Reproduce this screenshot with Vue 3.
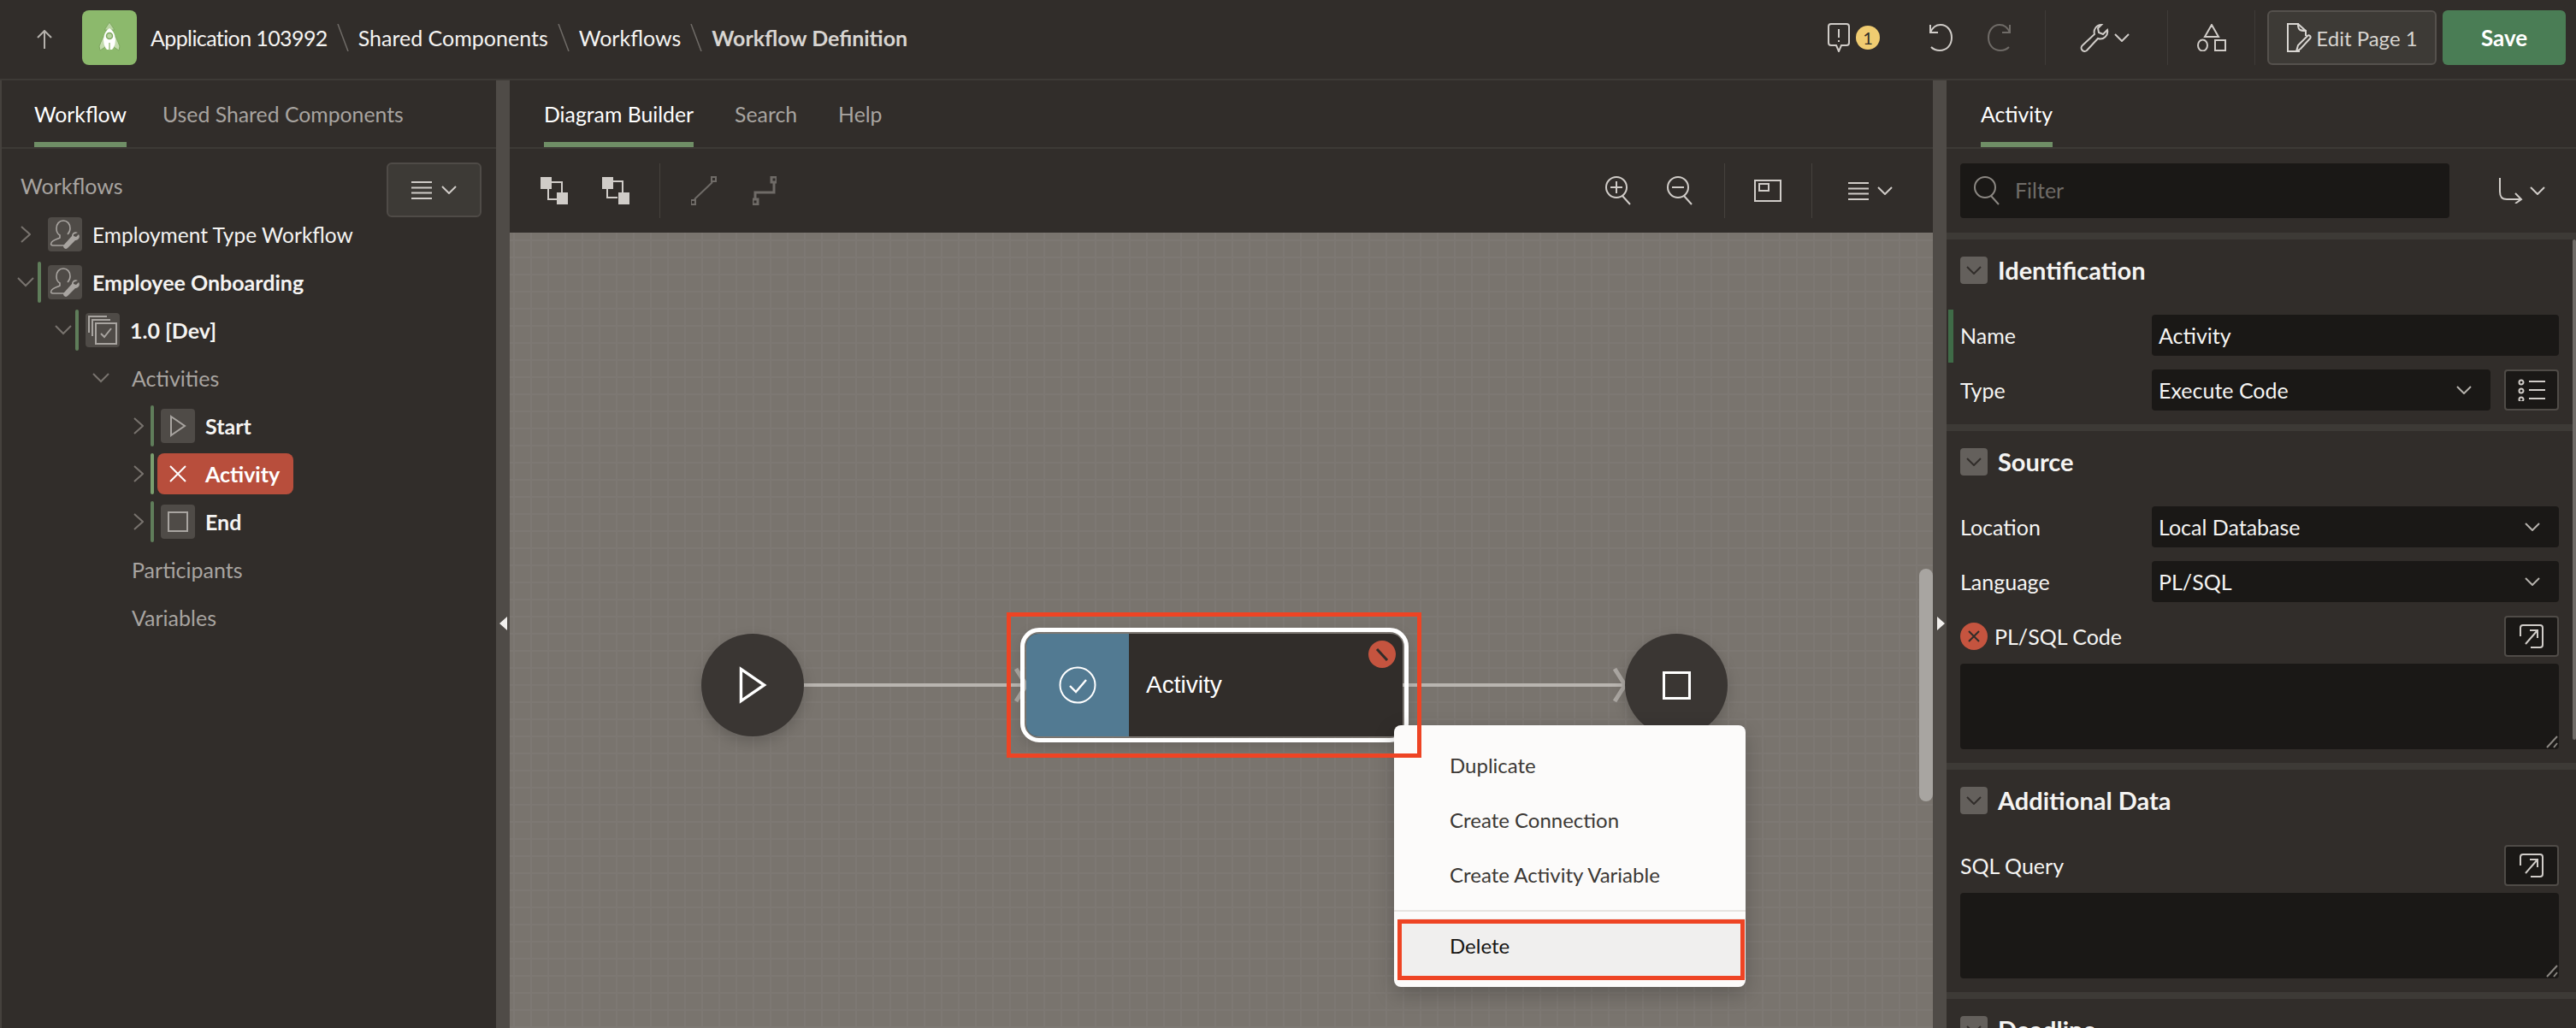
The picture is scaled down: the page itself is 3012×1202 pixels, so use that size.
<script setup>
import { h } from 'vue'

const I = {
  chevR: { w: 12, h: 20, d: 'M1 1L11 10L1 19' },
  chevD: { w: 20, h: 12, d: 'M1 1L10 10L19 1' },
  chevS: { w: 18, h: 10, d: 'M1 1L9 9L17 1' },
  menu: { w: 24, h: 21, d: 'M0 1H24M0 7.5H24M0 13.5H24M0 20H24' },
  up: { w: 20, h: 23, d: 'M10 22V1M2 9L10 1L18 9' },
  notif: { w: 26, h: 34, d: 'M4 1H22A3 3 0 0 1 25 4V23A3 3 0 0 1 22 26H16L13 33L10 26H4A3 3 0 0 1 1 23V4A3 3 0 0 1 4 1ZM13 7V17M13 20V22' },
  undo: { w: 32, h: 34, d: 'M5 2V11H14M5 11C8 4 13 2 17 2C25 2 30 9 30 17C30 26 24 32 16 32C12 32 9 31 6 28' },
  redo: { w: 32, h: 34, d: 'M27 2V11H18M27 11C24 4 19 2 15 2C7 2 2 9 2 17C2 26 8 32 16 32C20 32 23 31 26 28' },
  wrench: { w: 34, h: 34, d: 'M25 2A8.5 8.5 0 0 0 17 13L3 26A3.6 3.6 0 0 0 8 32L21 18A8.5 8.5 0 0 0 32 8L27 13L22 11L21 6Z' },
  shapes: { w: 34, h: 32, d: 'M17 1L25 15H9ZM12 25A5.5 6.5 0 1 1 1 25A5.5 6.5 0 1 1 12 25ZM21 19H33V31H21Z' },
  page: { w: 30, h: 34, d: 'M16 33H2V1H14C14 8 16 9 23 9V15M14 1L23 9M12 33L14 26L25 15C27 13 30 16 28 18L17 30Z' },
  align1: { w: 32, h: 32, d: 'M9 6H25V26H9Z' },
  align2: { w: 32, h: 32, d: 'M10 5H24V24M6 14V24H18' },
  line: { w: 30, h: 34, d: 'M4 27L25 7M0 28H5V33H0ZM24 1H29V6H24Z' },
  elbow: { w: 28, h: 34, d: 'M3 27V19H25V7M0 27H6V33H0ZM22 1H28V7H22Z' },
  zoomIn: { w: 32, h: 34, d: 'M25 13A12 12 0 1 1 1 13A12 12 0 1 1 25 13ZM20 23L29 33M13 6V20M6 13H20' },
  zoomOut: { w: 32, h: 34, d: 'M25 13A12 12 0 1 1 1 13A12 12 0 1 1 25 13ZM20 23L29 33M6 13H20' },
  frame: { w: 32, h: 26, d: 'M1 1H31V25H1ZM6 5H17V13H6Z' },
  search: { w: 32, h: 34, d: 'M25 13A12 12 0 1 1 1 13A12 12 0 1 1 25 13ZM20 23L29 33' },
  route: { w: 28, h: 30, d: 'M1 0V16C1 22 3 25 9 25H26M19 18L26 25L19 30' },
  list: { w: 32, h: 26, d: 'M6.5 4A2.5 2.5 0 1 1 1.5 4A2.5 2.5 0 1 1 6.5 4ZM6.5 14A2.5 2.5 0 1 1 1.5 14A2.5 2.5 0 1 1 6.5 14ZM6.5 24A2.5 2.5 0 1 1 1.5 24A2.5 2.5 0 1 1 6.5 24ZM13 3H32M13 13H32M13 23H32' },
  ext: { w: 28, h: 28, d: 'M1 14V4A3 3 0 0 1 4 1H24A3 3 0 0 1 27 4V24A3 3 0 0 1 24 27H13M7 23L21 7M12 7H21V16' },
  user: { w: 36, h: 34, sw: 1.6, d: 'M16 1C11 1 8 5 8 10C8 14 10 17 12 18V21C8 23 3 24 2 27C1 29 2 30 4 30H18M16 1C21 1 24 5 24 10C24 13 23 15 21 17', f: 'M33 15C30 13 26 15 26 19L17 29A2.5 2.5 0 0 0 21 33L30 24C34 24 36 20 34 17L31 20L28 19L28 17Z' },
  versions: { w: 34, h: 34, d: 'M1 20V1H22M5 24V5H26M9 9H33V33H9ZM15 21L19 25L27 15' },
  play: { w: 20, h: 26, d: 'M2 2L18 13L2 24Z' },
  stop: { w: 24, h: 24, d: 'M1 1H23V23H1Z' },
  x: { w: 20, h: 20, d: 'M1 1L19 19M19 1L1 19' }
}
const Ic = (p) => {
  const i = I[p.n]
  const kids = [h('path', { d: i.d })]
  if (i.f) kids.push(h('path', { d: i.f, fill: 'currentColor', stroke: 'none' }))
  return h('svg', { width: i.w, height: i.h, viewBox: `0 0 ${i.w} ${i.h}`, fill: 'none', stroke: 'currentColor', 'stroke-width': p.sw || i.sw || 2, class: 'ic' }, kids)
}
Ic.props = ['n', 'sw']

const crumbs = ['Application 103992', 'Shared Components', 'Workflows']

const tree = [
  { label: 'Employment Type Workflow', level: 0, chev: 'chevR', icon: 'user', cls: 'norm' },
  { label: 'Employee Onboarding', level: 0, chev: 'chevD', icon: 'user', bar: true, cls: 'bold' },
  { label: '1.0 [Dev]', level: 1, chev: 'chevD', icon: 'versions', bar: true, cls: 'bold' },
  { label: 'Activities', level: 2, chev: 'chevD', cls: 'muted' },
  { label: 'Start', level: 3, chev: 'chevR', icon: 'play', bar: true, cls: 'bold' },
  { label: 'Activity', level: 3, chev: 'chevR', icon: 'x', bar: true, cls: 'bold', err: true },
  { label: 'End', level: 3, chev: 'chevR', icon: 'stop', bar: true, cls: 'bold' },
  { label: 'Participants', level: 2, cls: 'muted' },
  { label: 'Variables', level: 2, cls: 'muted' }
]
const menuItems = ['Duplicate', 'Create Connection', 'Create Activity Variable']
</script>

<template>
  <div class="app">
    <header class="top">
      <span class="up"><Ic n="up" /></span>
      <span class="logo">
        <svg width="64" height="64" viewBox="0 0 64 64">
          <path d="M26 17L32 8L38 17Z" transform="translate(0 6)" fill="#b9d4a2" stroke="#7fa861" />
          <path d="M25 30L20 42L21 47L27 43ZM39 30L44 42L43 47L37 43Z" fill="#c3dbae" stroke="#7fa861" />
          <path d="M32 21C37 24 39 30 39 35C39 40 37 44 35 46H29C27 44 25 40 25 35C25 30 27 24 32 21Z" fill="#fff" />
          <circle cx="32" cy="30" r="3.5" fill="#b9d4a2" stroke="#7fa861" stroke-width="1.5" />
          <path d="M32 38V47" stroke="#9cc07f" stroke-width="1.5" />
        </svg>
      </span>
      <nav class="crumbs">
        <template v-for="c in crumbs" :key="c">
          <span class="crumb" :class="{ tight: c.startsWith('App') }">{{ c }}</span>
          <svg class="slash" width="14" height="32" viewBox="0 0 14 32"><path d="M1 0L13 32" stroke="#6f6b67" stroke-width="1.5" /></svg>
        </template>
        <span class="crumb cur">Workflow Definition</span>
      </nav>
      <div class="top-right">
        <span class="notif"><Ic n="notif" /><span class="badge">1</span></span>
        <span class="undo"><Ic n="undo" /></span>
        <span class="redo"><Ic n="redo" /></span>
        <i class="tdiv d1"></i>
        <span class="wrench"><Ic n="wrench" /><Ic n="chevS" /></span>
        <i class="tdiv d2"></i>
        <span class="shapes"><Ic n="shapes" /></span>
        <i class="tdiv d3"></i>
        <button class="edit"><Ic n="page" /><span>Edit Page 1</span></button>
        <button class="save">Save</button>
      </div>
    </header>

    <div class="body">
      <aside class="left">
        <div class="tabs">
          <span class="tab on">Workflow</span>
          <span class="tab">Used Shared Components</span>
        </div>
        <div class="wf-head">
          <span class="wf-title">Workflows</span>
          <button class="menu-btn"><Ic n="menu" /><Ic n="chevS" /></button>
        </div>
        <div v-for="r in tree" :key="r.label" class="row" :class="r.cls" :style="{ paddingLeft: 16 + r.level * 44 + 'px' }">
          <span class="chev"><Ic v-if="r.chev" :n="r.chev" /></span>
          <i class="bar" :class="{ vis: r.bar, hi: r.err }"></i>
          <span v-if="r.icon" class="node" :class="{ err: r.err }">
            <span class="ticon"><Ic :n="r.icon" /></span>
            <span class="rlabel">{{ r.label }}</span>
          </span>
          <span v-else class="rlabel plain">{{ r.label }}</span>
        </div>
      </aside>

      <div class="split"><i class="tri l"></i></div>

      <main class="center">
        <div class="tabs">
          <span class="tab on">Diagram Builder</span>
          <span class="tab">Search</span>
          <span class="tab">Help</span>
        </div>
        <div class="toolbar">
          <span class="tool a1"><i class="sq s1"></i><Ic n="align1" /><i class="sq s2"></i></span>
          <span class="tool a2"><i class="sq s1"></i><Ic n="align2" /><i class="sq s2"></i></span>
          <i class="vdiv v1"></i>
          <span class="dim t-line"><Ic n="line" /></span>
          <span class="dim t-elbow"><Ic n="elbow" sw="3" /></span>
          <span class="grow"></span>
          <span class="lt t-zi"><Ic n="zoomIn" /></span>
          <span class="lt t-zo"><Ic n="zoomOut" /></span>
          <i class="vdiv v2"></i>
          <span class="lt t-fr"><Ic n="frame" /></span>
          <i class="vdiv v3"></i>
          <span class="lt t-mn"><Ic n="menu" /><Ic n="chevS" /></span>
        </div>
        <div class="canvas">
          <svg class="wires" width="1664" height="930" viewBox="0 0 1664 930">
            <path d="M344 529H604M1044 529H1304" stroke="#b9b5b0" stroke-width="4" fill="none" />
            <path d="M592 510L604 529L592 548M1292 510L1304 529L1292 548" stroke="#aaa6a1" stroke-width="5" fill="none" />
          </svg>
          <div class="circle start"><Ic n="play" sw="2" /></div>
          <div class="circle end"><Ic n="stop" sw="2.4" /></div>

          <div class="ring"></div>
          <div class="act">
            <div class="act-ic">
              <svg width="44" height="44" viewBox="0 0 44 44" fill="none" stroke="#fff" stroke-width="2"><circle cx="22" cy="22" r="20.5" /><path d="M13 23L20 30L32 16" stroke-width="2.4" /></svg>
            </div>
            <div class="act-name">Activity</div>
            <span class="act-err"><svg width="32" height="32" viewBox="0 0 32 32"><path d="M10 10L22 23" stroke="#312d2a" stroke-width="3" /></svg></span>
          </div>

          <div class="ctx">
            <div v-for="m in menuItems" :key="m" class="ctx-item">{{ m }}</div>
            <div class="ctx-sep"></div>
            <div class="ctx-item del">Delete</div>
          </div>

          <div class="mark m1"></div>
          <div class="mark m2"></div>

          <div class="vthumb"></div>
        </div>
      </main>

      <div class="split"><i class="tri r"></i></div>

      <aside class="right">
        <div class="tabs rt"><span class="tab on">Activity</span></div>
        <div class="filter">
          <div class="finput"><span class="fic"><Ic n="search" /></span><span class="ftext">Filter</span></div>
          <span class="route"><Ic n="route" /><Ic n="chevS" /></span>
        </div>

        <section class="sec">
          <h3><span class="tog"><Ic n="chevS" /></span>Identification</h3>
          <div class="fld first changed"><label>Name</label><div class="in">Activity</div></div>
          <div class="fld"><label>Type</label>
            <div class="in sel short">Execute Code<Ic n="chevS" /></div>
            <span class="sq-btn"><Ic n="list" /></span>
          </div>
        </section>

        <section class="sec">
          <h3><span class="tog"><Ic n="chevS" /></span>Source</h3>
          <div class="fld first"><label>Location</label><div class="in sel">Local Database<Ic n="chevS" /></div></div>
          <div class="fld"><label>Language</label><div class="in sel">PL/SQL<Ic n="chevS" /></div></div>
          <div class="fld code"><label class="wide"><span class="errdot"><svg width="14" height="14" viewBox="0 0 14 14"><path d="M1 1L13 13M13 1L1 13" stroke="#312d2a" stroke-width="2" /></svg></span>PL/SQL Code</label><span class="sq-btn"><Ic n="ext" /></span></div>
          <div class="ta"><svg class="grip" width="16" height="16" viewBox="0 0 16 16"><path d="M2 15L14 2M10 15L14 10" stroke="#8b8782" stroke-width="2" /></svg></div>
        </section>

        <section class="sec">
          <h3><span class="tog"><Ic n="chevS" /></span>Additional Data</h3>
          <div class="fld code first"><label class="wide">SQL Query</label><span class="sq-btn"><Ic n="ext" /></span></div>
          <div class="ta"><svg class="grip" width="16" height="16" viewBox="0 0 16 16"><path d="M2 15L14 2M10 15L14 10" stroke="#8b8782" stroke-width="2" /></svg></div>
        </section>

        <section class="sec">
          <h3><span class="tog"><Ic n="chevS" /></span>Deadline</h3>
        </section>

        <div class="rscroll"></div>
      </aside>
    </div>
  </div>
</template>

<style>
html, body { margin: 0; background: #312d2a; overflow: hidden; }
</style>

<style scoped>
.app { width: 3012px; height: 1202px; overflow: hidden; background: #312d2a; color: #fff; font-family: Lato, "Noto Sans", sans-serif; font-size: 26px; display: flex; flex-direction: column; }
.ic { display: block; flex: none; }
i { display: block; }
button { font-family: inherit; padding: 0; }

.top { height: 94px; box-sizing: border-box; border-bottom: 2px solid #3d3a36; display: flex; align-items: center; flex: none; position: relative; }
.up { margin-left: 42px; color: #b5b1ac; width: 54px; }
.logo { width: 64px; height: 64px; background: #8cb96c; border-radius: 8px; display: block; margin-top: -4px; }
.logo svg { display: block; }
.crumbs { margin-left: 16px; display: flex; align-items: center; margin-top: -4px; font-size: 25px; }
.crumb { color: #f5f4f2; white-space: nowrap; }
.tight { letter-spacing: -0.6px; }
.cur { font-weight: 700; color: #d8d5d1; }
.slash { margin: 0 11px; }
.top-right { margin-left: auto; margin-top: -4px; display: flex; align-items: center; padding-right: 12px; }
.notif { display: flex; align-items: center; gap: 7px; color: #d0ccc8; margin-right: 54px; margin-left: 6px; }
.badge { width: 28px; height: 28px; border-radius: 50%; background: #f0cc71; color: #312d2a; font-size: 20px; display: flex; align-items: center; justify-content: center; }
.undo { color: #d0ccc8; margin-right: 39px; }
.redo { color: #6f6b67; margin-right: 36px; }
.tdiv { width: 1px; height: 64px; background: #3f3b38; }
.wrench { display: flex; align-items: center; gap: 6px; color: #d0ccc8; margin: 0 44px 0 40px; }
.shapes { color: #d0ccc8; margin: 0 33px 0 34px; }
.edit { margin-left: 14px; width: 198px; height: 64px; box-sizing: border-box; background: #3d3a36; border: 2px solid #55514d; border-radius: 6px; color: #d8d5d1; font-size: 24px; display: flex; align-items: center; justify-content: center; gap: 5px; }
.save { margin-left: 7px; width: 144px; height: 64px; border: 0; border-radius: 6px; background: #4a7d55; color: #fff; font-size: 26px; font-weight: 700; }

.body { flex: 1; display: flex; min-height: 0; }
.left { width: 580px; flex: none; box-sizing: border-box; border-left: 2px solid #45413d; overflow: hidden; }
.split { width: 16px; flex: none; background: #4f4b47; position: relative; }
.tri { position: absolute; top: 627px; border: 8px solid transparent; border-top-width: 8px; border-bottom-width: 8px; }
.tri.l { border-right: 9px solid #f2f0ee; border-left: 0; left: 4px; }
.tri.r { left: 5px; border-left: 9px solid #f2f0ee; border-right: 0; }

.tabs { height: 80px; box-sizing: border-box; border-bottom: 2px solid #3d3a36; display: flex; gap: 48px; padding-left: 40px; }
.left .tabs { padding-left: 38px; gap: 42px; }
.tab { height: 78px; box-sizing: border-box; padding-top: 25px; color: #a8a4a0; font-size: 24.8px; white-space: nowrap; }
.tab.on { color: #fff; border-bottom: 6px solid #6f8e66; height: 78px; }
.rt.tabs { padding-left: 40px; }

.wf-head { height: 72px; display: flex; align-items: flex-start; justify-content: space-between; padding: 0 17px 0 22px; }
.wf-title { color: #a8a4a0; font-size: 25px; margin-top: 28px; }
.menu-btn { margin-top: 16px; width: 111px; height: 64px; background: #3d3a36; border: 2px solid #4f4b47; border-radius: 6px; color: #d0ccc8; display: flex; align-items: center; justify-content: center; gap: 11px; position: relative; }

.row { height: 56px; display: flex; align-items: center; box-sizing: border-box; }
.chev { width: 24px; height: 24px; display: flex; align-items: center; justify-content: center; color: #78736e; margin-right: 2px; flex: none; }
.bar { width: 4px; height: 48px; border-radius: 2px; flex: none; margin-right: 4px; }
.bar.vis { background: #5f7d5a; }
.bar.hi { background: #7a9e6e; }
.node { display: flex; align-items: center; height: 48px; padding: 0 16px 0 4px; border-radius: 8px; }
.ticon { width: 40px; height: 40px; background: #4f4b47; border-radius: 4px; margin-right: 12px; display: flex; align-items: center; justify-content: center; color: #a8a4a0; }
.rlabel { font-size: 25px; white-space: nowrap; color: #f5f4f2; }
.norm .rlabel { font-size: 24.5px; }
.bold .rlabel { font-weight: 700; }
.node.err { background: #b84e3c; }
.node.err .ticon { background: none; color: #fff; }
.node.err .rlabel { color: #fff; }
.plain { margin-left: 14px; }
.muted .rlabel { color: #a8a4a0; }

.center { width: 1664px; flex: none; display: flex; flex-direction: column; }
.toolbar { height: 98px; flex: none; display: flex; align-items: center; padding: 0 36px; box-sizing: border-box; }
.tool { position: relative; width: 32px; height: 32px; color: #d0ccc8; }
.a2 { margin-left: 40px; }
.sq { position: absolute; width: 13px; height: 14px; background: #d0ccc8; }
.s1 { left: 0; top: 0; }
.s2 { right: 0; bottom: 0; }
.vdiv { width: 1px; height: 64px; background: #45413d; }
.v1 { margin: 0 36px 0 35px; }
.dim { color: #6f6b67; }
.t-elbow { margin-left: 42px; }
.grow { flex: 1; }
.lt { color: #d0ccc8; display: flex; align-items: center; }
.t-zo { margin-left: 40px; }
.v2 { margin: 0 34px 0 35px; }
.v3 { margin: 0 42px 0 35px; }
.t-mn { gap: 10px; margin-right: 11px; }

.canvas { flex: 1; position: relative; overflow: hidden; background-color: #79746e;
  background-image: linear-gradient(to right, #7d7873 2px, transparent 2px), linear-gradient(to bottom, #7d7873 2px, transparent 2px);
  background-size: 20px 20px; background-position: 4px 8px; }
.wires { position: absolute; left: 0; top: 0; }
.circle { position: absolute; top: 469px; width: 120px; height: 120px; border-radius: 50%; background: #3a3633; color: #fff; display: flex; align-items: center; justify-content: center; box-shadow: 0 6px 16px rgba(0,0,0,.18); }
.start { left: 224px; }
.start .ic { width: 34px; height: 44px; margin-left: 0; }
.end { left: 1304px; }
.end .ic { width: 33px; height: 33px; }
.ring { position: absolute; left: 597px; top: 462px; width: 454px; height: 134px; box-sizing: border-box; border: 5px solid #fff; border-radius: 22px; box-shadow: 0 6px 16px rgba(0,0,0,.12); }
.act { position: absolute; left: 604px; top: 469px; width: 440px; height: 120px; border-radius: 14px; overflow: hidden; background: #312d2a; display: flex; align-items: center; }
.act-ic { width: 120px; height: 120px; background: #527a92; display: flex; align-items: center; justify-content: center; flex: none; }
.act-ic svg { display: block; }
.act-name { margin-left: 20px; font-family: "Liberation Sans", Arial, sans-serif; font-size: 28px; color: #fff; }
.act-err { position: absolute; left: 400px; top: 8px; width: 32px; height: 32px; border-radius: 50%; background: #c5543f; }
.act-err svg { display: block; }

.ctx { position: absolute; left: 1034px; top: 576px; width: 411px; height: 306px; box-sizing: border-box; padding-top: 14px; background: #fcfbfa; border-radius: 8px; box-shadow: 0 8px 24px rgba(0,0,0,.22); }
.ctx-item { height: 64px; display: flex; align-items: center; padding-left: 65px; font-size: 24px; color: #3b3835; }
.ctx-sep { height: 2px; margin-top: 10px; background: #e6e4e1; }
.del { margin: 8px 0 0 6px; height: 70px; box-sizing: border-box; padding: 0 0 7px 59px; background: #f0efee; color: #161513; }

.mark { position: absolute; box-sizing: border-box; border: 5px solid #ee4424; pointer-events: none; }
.m1 { left: 581px; top: 444px; width: 485px; height: 170px; }
.m2 { left: 1038px; top: 803px; width: 406px; height: 71px; }

.vthumb { position: absolute; left: 1648px; top: 393px; width: 16px; height: 272px; background: #a8a5a1; border-radius: 8px; }

.right { flex: 1; position: relative; overflow: hidden; }
.filter { height: 98px; box-sizing: border-box; padding: 16px; display: flex; align-items: center; }
.finput { width: 572px; height: 64px; background: #1a1816; border-radius: 4px; display: flex; align-items: center; padding-left: 16px; box-sizing: border-box; }
.fic { color: #8b8782; margin-right: 16px; }
.ftext { color: #6f6b67; font-size: 25px; margin-top: -2px; }
.route { display: flex; align-items: center; gap: 8px; color: #d0ccc8; margin-left: 58px; }

.sec { border-top: 8px solid #3d3a36; padding: 20px 20px 16px 16px; }
.sec h3 { margin: 0; display: flex; align-items: center; font-size: 29px; font-weight: 700; height: 32px; line-height: 30px; color: #f5f4f2; }
.tog { width: 32px; height: 32px; border-radius: 4px; background: #64605c; color: #312d2a; display: flex; align-items: center; justify-content: center; margin-right: 12px; }
.fld { display: flex; align-items: center; height: 48px; margin-top: 16px; position: relative; }
.fld.first { margin-top: 36px; }
.fld label { width: 224px; flex: none; font-size: 25px; color: #f5f4f2; }
.fld label.wide { flex: 1; display: flex; align-items: center; }
.changed::before { content: ""; position: absolute; left: -14px; top: -6px; width: 6px; height: 62px; background: #3f6b47; }
.in { flex: 1; height: 48px; box-sizing: border-box; background: #1a1816; border-radius: 4px; padding-left: 8px; display: flex; align-items: center; justify-content: space-between; font-size: 25px; color: #f5f4f2; }
.sel { padding-right: 22px; }
.sel .ic { color: #b5b1ac; }
.short { flex: none; width: 396px; }
.sq-btn { width: 64px; height: 48px; margin-left: 16px; box-sizing: border-box; background: #1a1816; border: 2px solid #4f4b47; border-radius: 4px; display: flex; align-items: center; justify-content: center; color: #d0ccc8; flex: none; }
.errdot { width: 32px; height: 32px; border-radius: 50%; background: #c5543f; display: flex; align-items: center; justify-content: center; margin-right: 8px; }
.errdot svg { display: block; }
.ta { margin-top: 8px; height: 100px; background: #1a1816; border-radius: 4px; position: relative; }
.grip { position: absolute; right: 0; bottom: 1px; }
.rscroll { position: absolute; right: 0; top: 186px; width: 4px; height: 585px; border-radius: 2px; background: #6f6b67; }
</style>
